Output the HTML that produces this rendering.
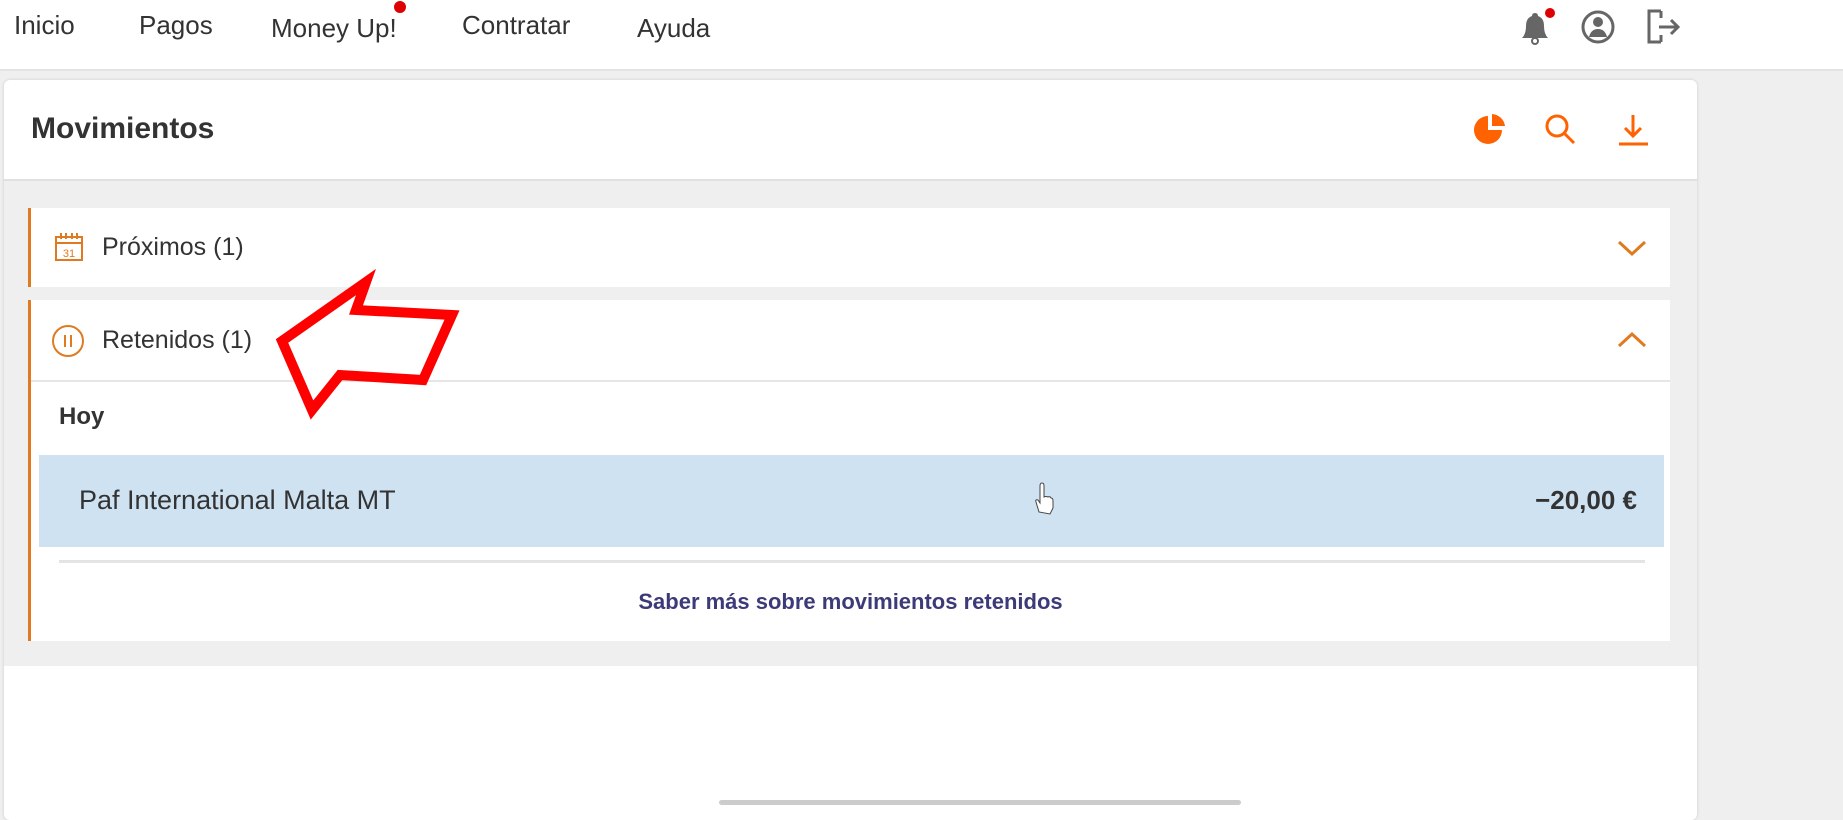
<!DOCTYPE html>
<html><head><meta charset="utf-8"><style>
*{margin:0;padding:0;box-sizing:border-box}
body{width:1843px;height:805px;background:#efefef;font-family:"Liberation Sans",sans-serif;color:#333;position:relative;overflow:hidden}
.nav{position:absolute;left:0;top:0;width:1843px;height:71px;background:#fff;border-bottom:2px solid #e2e2e2}
.nav span{position:absolute;top:10px;font-size:26px;color:#333}
.abs{position:absolute}
.card{position:absolute;left:4px;top:80px;width:1693px;height:740px;background:#fff;border-radius:6px;box-shadow:0 0 3px rgba(0,0,0,.15)}
.grey{position:absolute;left:4px;top:179px;width:1693px;height:487px;background:#efefef;border-top:2px solid #e0e0e0}
.acc{position:absolute;left:28px;width:1642px;background:#fff;border-left:3px solid #e07a20}
.t{position:absolute;font-size:25px;color:#333}
</style></head><body>
<div class="nav">
<span style="left:14px">Inicio</span>
<span style="left:139px">Pagos</span>
<span style="left:271px;top:13px">Money Up!</span>
<span style="left:462px">Contratar</span>
<span style="left:637px;top:13px">Ayuda</span>
<div class="abs" style="left:394px;top:1px;width:12px;height:12px;border-radius:50%;background:#d00"></div>
<svg class="abs" style="left:1516px;top:8px" width="40" height="40" viewBox="0 0 40 40"><path d="M6 30 Q10 26 10 18 Q10 10 16 8 Q16 5 19 5 Q22 5 22 8 Q28 10 28 18 Q28 26 32 30 Z" fill="#666"/><circle cx="19" cy="33" r="3" fill="none" stroke="#666" stroke-width="2"/><circle cx="34" cy="5" r="5" fill="#d00"/></svg>
<svg class="abs" style="left:1580px;top:9px" width="36" height="36" viewBox="0 0 36 36"><circle cx="18" cy="18" r="15" fill="none" stroke="#666" stroke-width="3"/><circle cx="18" cy="13" r="5" fill="#666"/><path d="M9 28 Q11 20 18 20 Q25 20 27 28 Z" fill="#666"/></svg>
<svg class="abs" style="left:1645px;top:8px" width="38" height="38" viewBox="0 0 38 38"><path d="M16 3 H4 V34 H16 M16 3 V10 M16 34 V27" fill="none" stroke="#666" stroke-width="3"/><path d="M14 19 H32 M26 12 L33 19 L26 26" fill="none" stroke="#666" stroke-width="3"/></svg>
</div>
<div class="card"></div>
<div class="t" style="left:31px;top:112px;font-size:30px;font-weight:bold;color:#333">Movimientos</div>
<svg class="abs" style="left:1472px;top:112px" width="36" height="36" viewBox="0 0 36 36"><path d="M16 4 A14 14 0 1 0 30 18 L16 18 Z" fill="#ff6200"/><path d="M20 2 A14 14 0 0 1 33 14 L20 14 Z" fill="#ff6200"/></svg>
<svg class="abs" style="left:1543px;top:112px" width="36" height="36" viewBox="0 0 36 36"><circle cx="14" cy="14" r="10" fill="none" stroke="#ff6200" stroke-width="3"/><path d="M21 21 L31 31" stroke="#ff6200" stroke-width="3"/></svg>
<svg class="abs" style="left:1616px;top:112px" width="36" height="36" viewBox="0 0 36 36"><path d="M17 3 V24 M9 16 L17 24 L25 16 M3 32 H32" fill="none" stroke="#ff6200" stroke-width="3"/></svg>
<div class="grey"></div>
<div class="acc" style="top:208px;height:79px"></div>
<svg class="abs" style="left:54px;top:232px" width="30" height="30" viewBox="0 0 30 30"><rect x="2" y="5" width="26" height="23" fill="none" stroke="#e07a20" stroke-width="2"/><path d="M2 11 H28 M7 1 V7 M12 1 V7 M18 1 V7 M23 1 V7" stroke="#e07a20" stroke-width="2"/><text x="15" y="25" font-size="11" text-anchor="middle" fill="#e07a20" font-family="Liberation Sans">31</text></svg>
<div class="t" style="left:102px;top:233px">Próximos (1)</div>
<svg class="abs" style="left:1617px;top:238px" width="30" height="20" viewBox="0 0 30 20"><path d="M2 4 L15 16 L28 4" fill="none" stroke="#e07a20" stroke-width="3"/></svg>
<div class="acc" style="top:300px;height:341px"></div>
<div class="abs" style="left:31px;top:380px;width:1639px;height:2px;background:#e6e6e6"></div>
<svg class="abs" style="left:51px;top:324px" width="34" height="34" viewBox="0 0 34 34"><circle cx="17" cy="17" r="15" fill="none" stroke="#e07a20" stroke-width="2"/><path d="M14 11 V23 M20 11 V23" stroke="#e07a20" stroke-width="2"/></svg>
<div class="t" style="left:102px;top:326px">Retenidos (1)</div>
<svg class="abs" style="left:1617px;top:330px" width="30" height="20" viewBox="0 0 30 20"><path d="M2 16 L15 4 L28 16" fill="none" stroke="#e07a20" stroke-width="3"/></svg>
<div class="t" style="left:59px;top:403px;font-weight:bold;font-size:24px">Hoy</div>
<div class="abs" style="left:39px;top:455px;width:1625px;height:92px;background:#cfe2f2"></div>
<div class="t" style="left:79px;top:485px;font-size:27px">Paf International Malta MT</div>
<div class="t" style="left:1480px;top:485px;width:157px;text-align:right;font-weight:bold;font-size:26px">−20,00 €</div>
<svg class="abs" style="left:1033px;top:482px" width="22" height="34" viewBox="0 0 22 34"><path d="M6 30 L3 20 Q2 17 5 18 L7 21 V4 Q7 1 9 1 Q11 1 11 4 V15 Q13 14 15 15 Q17 14 18 16 Q20 16 20 19 V26 L17 32 Z" fill="#fff" stroke="#444" stroke-width="1"/></svg>
<div class="abs" style="left:59px;top:560px;width:1586px;height:3px;background:#e4e4e4"></div>
<div class="t" style="left:31px;top:589px;width:1639px;text-align:center;font-size:22px;color:#3c3a78;font-weight:bold">Saber más sobre movimientos retenidos</div>
<div class="abs" style="left:719px;top:800px;width:522px;height:5px;background:#ccc;border-radius:3px"></div>
<svg class="abs" style="left:0;top:0" width="1843" height="805"><polygon points="282,341 366,282 356,310 452,315 423,380 340,375 312,410" fill="#fff" stroke="#f00" stroke-width="10" stroke-linejoin="miter"/></svg>
</body></html>
